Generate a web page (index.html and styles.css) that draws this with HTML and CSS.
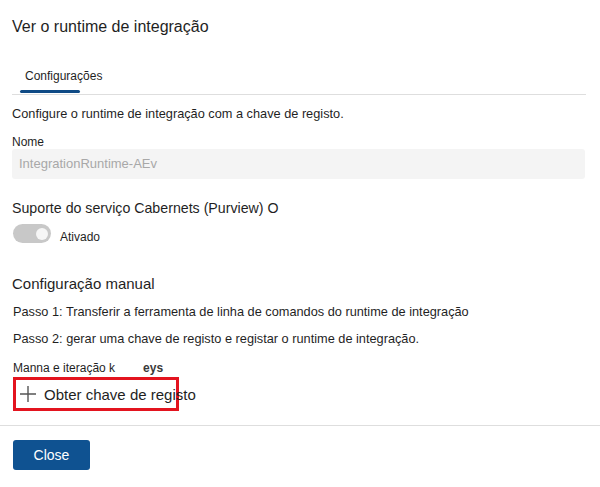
FILE: index.html
```html
<!DOCTYPE html>
<html lang="pt">
<head>
<meta charset="utf-8">
<title>Ver o runtime de integração</title>
<link rel="stylesheet" href="styles.css">
</head>
<body>
<div class="content">
  <h1 class="title">Ver o runtime de integração</h1>
  <div class="tabs">
    <div class="tab">Configurações</div>
  </div>
  <p class="desc">Configure o runtime de integração com a chave de registo.</p>
  <div class="label">Nome</div>
  <div class="input">IntegrationRuntime-AEv</div>
  <div class="support">Suporte do serviço Cabernets (Purview) O</div>
  <div class="toggle-row">
    <span class="toggle"><span class="knob"></span></span>
    <span class="toggle-label">Ativado</span>
  </div>
  <div class="section">Configuração manual</div>
  <p class="step step1">Passo 1: Transferir a ferramenta de linha de comandos do runtime de integração</p>
  <p class="step step2">Passo 2: gerar uma chave de registo e registar o runtime de integração.</p>
  <div class="keys"><span>Manna e iteração k</span><span class="keys-end">eys</span></div>
  <div class="highlight">
    <div class="get-key">
      <svg class="plus" width="18" height="18" viewBox="0 0 18 18" aria-hidden="true"><path d="M9 1v16M1 9h16" stroke="#555" stroke-width="1.4" fill="none"/></svg>
      <span>Obter chave de registo</span>
    </div>
  </div>
</div>
<div class="footer">
  <button class="close">Close</button>
</div>
</body>
</html>
```
FILE: styles.css
```css
body {
  margin: 0;
  font-family: "Liberation Sans", Arial, sans-serif;
  color: #1f1f1f;
  background: #fff;
}
.content {
  padding: 0 14px 0 12px;
}
.title {
  margin: 15px 0 0;
  font-size: 16px;
  font-weight: 400;
  line-height: 24px;
}
.tabs {
  border-bottom: 1px solid #dedede;
  padding-top: 27px;
}
.tab {
  position: relative;
  display: inline-block;
  padding: 0 0 10px 13px;
  font-size: 12px;
  line-height: 16px;
}
.tab::after {
  content: "";
  position: absolute;
  left: 8px;
  bottom: 1px;
  width: 60px;
  height: 3px;
  border-radius: 2px;
  background: #0f4a85;
}
.desc {
  margin: 10px 0 0;
  font-size: 12.75px;
  line-height: 18px;
}
.label {
  margin-top: 12px;
  font-size: 12px;
  line-height: 14px;
}
.input {
  height: 30px;
  box-sizing: border-box;
  padding-left: 7px;
  margin-right: 1px;
  background: #f4f4f4;
  border-radius: 3px;
  font-size: 13px;
  line-height: 30px;
  color: #a8a8a8;
}
.support {
  margin-top: 19px;
  font-size: 14.2px;
  line-height: 20px;
}
.toggle-row {
  margin-top: 6px;
  display: flex;
  align-items: flex-end;
  gap: 9px;
  padding-left: 1px;
}
.toggle {
  width: 38px;
  height: 19px;
  border-radius: 10px;
  background: #c8c8c8;
  display: flex;
  align-items: center;
  justify-content: flex-end;
  padding-right: 3px;
  box-sizing: border-box;
}
.knob {
  width: 12px;
  height: 12px;
  border-radius: 50%;
  background: #f6f6f6;
}
.toggle-label {
  font-size: 12px;
  line-height: 14px;
  margin-bottom: -1px;
}
.section {
  margin-top: 31px;
  font-size: 15px;
  line-height: 20px;
}
.step {
  margin: 10px 0 0 1px;
  font-size: 12.75px;
  line-height: 16px;
}
.step2 {
  margin-top: 11px;
}
.keys {
  margin: 14px 0 0 1px;
  font-size: 12px;
  line-height: 14px;
  display: flex;
}
.keys-end {
  margin-left: 28px;
  font-weight: 700;
  color: #3a3a3a;
}
.highlight {
  margin: 2px 0 0 1px;
  width: 166px;
  height: 34px;
  box-sizing: border-box;
  border: 3px solid #e3141f;
}
.get-key {
  display: flex;
  align-items: center;
  height: 28px;
  padding-left: 3px;
  gap: 7px;
  white-space: nowrap;
  font-size: 15px;
}
.plus {
  flex: none;
}
.footer {
  margin-top: 14px;
  border-top: 1px solid #dedede;
  padding: 14px 13px;
}
.close {
  width: 77px;
  height: 30px;
  border: none;
  border-radius: 3px;
  background: #0f5291;
  color: #fff;
  font-family: "Liberation Sans", Arial, sans-serif;
  font-size: 14px;
  padding: 0;
}
```
